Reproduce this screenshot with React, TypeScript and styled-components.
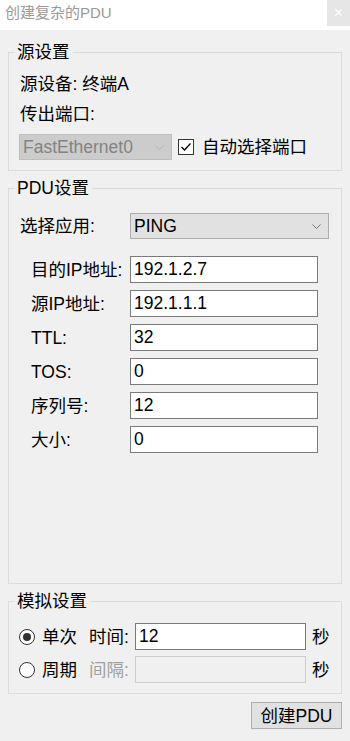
import React from "react"
import styled, { createGlobalStyle } from "styled-components"

const GlobalStyle = createGlobalStyle`
  html, body {
    margin: 0;
    padding: 0;
    background: #f0f0f0;
  }
  body {
    font-family: "Liberation Sans", "Noto Sans CJK SC", sans-serif;
    font-size: 17.5px;
    color: #000;
  }
  * {
    box-sizing: border-box;
  }
`

const Window = styled.div`
  display: flex;
  flex-direction: column;
  width: 350px;
  height: 741px;
  background: #f0f0f0;
`

const TitleBar = styled.div`
  display: flex;
  align-items: flex-start;
  justify-content: space-between;
  height: 30px;
  background: #fff;
  padding-left: 5px;
`

const Title = styled.span`
  font-size: 15px;
  line-height: 26px;
  color: #999;
`

const CloseButton = styled.div`
  width: 23px;
  height: 26px;
  display: flex;
  align-items: center;
  justify-content: center;
  background: #e6e6e6;
  color: #fff;
  font-size: 16px;
`

const Body = styled.div`
  flex: 1;
  display: flex;
  flex-direction: column;
  gap: 6px;
  padding: 11px 8px 12px 8px;
`

const Group = styled.fieldset<{ $grow?: boolean }>`
  margin: 0;
  padding: 0 8px 0 5px;
  border: 1px solid #dcdcdc;
  min-width: 0;
  flex: ${(p) => (p.$grow ? 1 : "none")};
`

const Legend = styled.legend`
  padding: 0 3px;
  line-height: 22px;
`

const SourceBody = styled.div`
  display: flex;
  flex-direction: column;
  padding: 10px 0 10px 6px;
`

const Line = styled.div<{ $top?: number }>`
  line-height: 22px;
  margin-top: ${(p) => p.$top ?? 0}px;
`

const PortRow = styled.div`
  display: flex;
  align-items: center;
  margin-top: 9px;
  margin-left: -1px;
`

const Select = styled.div<{ $disabled?: boolean; $width: number }>`
  display: flex;
  flex-shrink: 0;
  align-items: center;
  justify-content: space-between;
  width: ${(p) => p.$width}px;
  height: 26px;
  padding: 0 7px 0 3px;
  border: 1px solid ${(p) => (p.$disabled ? "#bfbfbf" : "#adadad")};
  background: ${(p) => (p.$disabled ? "#cccccc" : "#e1e1e1")};
  color: ${(p) => (p.$disabled ? "#838383" : "#000")};
`

const Checkbox = styled.span`
  display: flex;
  flex-shrink: 0;
  align-items: center;
  justify-content: center;
  width: 16px;
  height: 16px;
  margin-left: 6px;
  border: 1px solid #333;
  background: #fff;
`

const CheckLabel = styled.span`
  margin-left: 8px;
  line-height: 22px;
  white-space: nowrap;
`

const PduBody = styled.div`
  display: flex;
  flex-direction: column;
  padding: 14px 0 10px 6px;
`

const AppRow = styled.div`
  display: flex;
  align-items: center;
`

const AppLabel = styled.span`
  width: 110px;
  line-height: 22px;
`

const Fields = styled.div`
  display: flex;
  flex-direction: column;
  gap: 7px;
  margin-top: 17px;
  padding-left: 11px;
`

const FieldRow = styled.div`
  display: flex;
  align-items: center;
`

const FieldLabel = styled.span`
  width: 99px;
  line-height: 22px;
`

const Input = styled.div<{ $width: number; $disabled?: boolean }>`
  display: flex;
  align-items: center;
  width: ${(p) => p.$width}px;
  height: 27px;
  padding-left: 3px;
  border: 1px solid ${(p) => (p.$disabled ? "#cccccc" : "#7a7a7a")};
  background: ${(p) => (p.$disabled ? "#f0f0f0" : "#fff")};
`

const SimBody = styled.div`
  display: flex;
  flex-direction: column;
  gap: 6px;
  padding: 11px 0 10px 5px;
`

const SimRow = styled.div`
  display: flex;
  align-items: center;
`

const Radio = styled.span<{ $checked?: boolean }>`
  display: flex;
  flex-shrink: 0;
  align-items: center;
  justify-content: center;
  width: 16px;
  height: 16px;
  border-radius: 50%;
  border: 1px solid #333;
  background: #fff;
  margin-right: 7px;

  &::after {
    content: "";
    display: ${(p) => (p.$checked ? "block" : "none")};
    width: 8px;
    height: 8px;
    border-radius: 50%;
    background: #333;
  }
`

const OptionLabel = styled.span`
  width: 47px;
  line-height: 22px;
`

const TimeLabel = styled.span<{ $disabled?: boolean }>`
  width: 46px;
  line-height: 22px;
  color: ${(p) => (p.$disabled ? "#a0a0a0" : "#000")};
`

const Unit = styled.span`
  margin-left: 6px;
  line-height: 22px;
`

const Footer = styled.div`
  display: flex;
  justify-content: flex-end;
  margin-top: 2px;
`

const Button = styled.button`
  width: 91px;
  height: 27px;
  padding: 0;
  border: 1px solid #adadad;
  background: #e1e1e1;
  font: inherit;
  color: #000;
  line-height: 22px;
`

const Chevron = ({ color }: { color: string }) => (
  <svg width="9" height="5" viewBox="0 0 9 5">
    <polyline points="0.5,0.5 4.5,4.5 8.5,0.5" fill="none" stroke={color} strokeWidth="1" />
  </svg>
)

const fields = [
  { label: "目的IP地址:", value: "192.1.2.7" },
  { label: "源IP地址:", value: "192.1.1.1" },
  { label: "TTL:", value: "32" },
  { label: "TOS:", value: "0" },
  { label: "序列号:", value: "12" },
  { label: "大小:", value: "0" },
]

export default function App() {
  return (
    <Window>
      <GlobalStyle />
      <TitleBar>
        <Title>创建复杂的PDU</Title>
        <CloseButton>×</CloseButton>
      </TitleBar>
      <Body>
        <Group>
          <Legend>源设置</Legend>
          <SourceBody>
            <Line>源设备: 终端A</Line>
            <Line $top={8}>传出端口:</Line>
            <PortRow>
              <Select $disabled $width={153}>
                <span>FastEthernet0</span>
                <Chevron color="#b5b5b5" />
              </Select>
              <Checkbox>
                <svg width="12" height="10" viewBox="0 0 12 10">
                  <polyline points="1.5,5 4.5,8 10.5,1.5" fill="none" stroke="#000" strokeWidth="1.3" />
                </svg>
              </Checkbox>
              <CheckLabel>自动选择端口</CheckLabel>
            </PortRow>
          </SourceBody>
        </Group>

        <Group $grow>
          <Legend>PDU设置</Legend>
          <PduBody>
            <AppRow>
              <AppLabel>选择应用:</AppLabel>
              <Select $width={199}>
                <span>PING</span>
                <Chevron color="#777" />
              </Select>
            </AppRow>
            <Fields>
              {fields.map((f) => (
                <FieldRow key={f.label}>
                  <FieldLabel>{f.label}</FieldLabel>
                  <Input $width={188}>{f.value}</Input>
                </FieldRow>
              ))}
            </Fields>
          </PduBody>
        </Group>

        <Group>
          <Legend>模拟设置</Legend>
          <SimBody>
            <SimRow>
              <Radio $checked />
              <OptionLabel>单次</OptionLabel>
              <TimeLabel>时间:</TimeLabel>
              <Input $width={171}>12</Input>
              <Unit>秒</Unit>
            </SimRow>
            <SimRow>
              <Radio />
              <OptionLabel>周期</OptionLabel>
              <TimeLabel $disabled>间隔:</TimeLabel>
              <Input $width={171} $disabled />
              <Unit>秒</Unit>
            </SimRow>
          </SimBody>
        </Group>

        <Footer>
          <Button>创建PDU</Button>
        </Footer>
      </Body>
    </Window>
  )
}
